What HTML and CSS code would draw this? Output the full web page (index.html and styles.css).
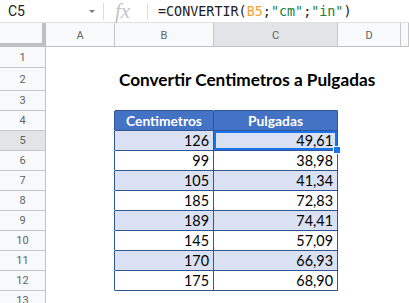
FILE: index.html
```html
<!DOCTYPE html>
<html lang="es">
<head>
    <meta charset="UTF-8">
    <meta name="viewport" content="width=device-width, initial-scale=1.0">
    <title>Convertir Centimetros a Pulgadas</title>
    <link rel="stylesheet" href="styles.css">
</head>
<body>
    <div class="formula-bar">
        <div class="name-box">
            <span class="cell-ref">C5</span>
            <span class="caret"></span>
        </div>
        <div class="sep"></div>
        <div class="fx">fx</div>
        <div class="sep"></div>
        <div class="formula">=CONVERTIR(<span class="ref">B5</span>;<span class="str">"cm"</span>;<span class="str">"in"</span>)</div>
    </div>

    <div class="sheet">
        <div class="row col-heads">
            <div class="corner"></div>
            <div class="ch col-a">A</div>
            <div class="ch col-b">B</div>
            <div class="ch col-c active">C</div>
            <div class="ch col-d">D</div>
            <div class="ch col-e"></div>
        </div>

        <div class="row r1">
            <div class="rh">1</div>
            <div class="cell col-a"></div>
            <div class="cell col-b"></div>
            <div class="cell col-c"></div>
            <div class="cell col-d"></div>
            <div class="cell col-e"></div>
        </div>

        <div class="row r2">
            <div class="rh">2</div>
            <div class="cell col-a"></div>
            <div class="cell col-b title">Convertir Centimetros a Pulgadas</div>
            <div class="cell col-c"></div>
            <div class="cell col-d"></div>
            <div class="cell col-e"></div>
        </div>

        <div class="row">
            <div class="rh">3</div>
            <div class="cell col-a"></div>
            <div class="cell col-b above-table"></div>
            <div class="cell col-c above-table"></div>
            <div class="cell col-d"></div>
            <div class="cell col-e"></div>
        </div>

        <div class="row">
            <div class="rh">4</div>
            <div class="cell col-a left-of-table"></div>
            <div class="cell col-b th">Centimetros</div>
            <div class="cell col-c th">Pulgadas</div>
            <div class="cell col-d"></div>
            <div class="cell col-e"></div>
        </div>

        <div id="rows"></div>

        <div class="row">
            <div class="rh">13</div>
            <div class="cell col-a"></div>
            <div class="cell col-b"></div>
            <div class="cell col-c"></div>
            <div class="cell col-d"></div>
            <div class="cell col-e"></div>
        </div>
    </div>

    <script>
        const data = [
            [126, '49,61'], [99, '38,98'], [105, '41,34'], [185, '72,83'],
            [189, '74,41'], [145, '57,09'], [170, '66,93'], [175, '68,90']
        ];

        let html = '';
        data.forEach((d, i) => {
            const n = i + 5;
            const band = i % 2 === 0 ? ' band' : '';
            const sel = n === 5 ? ' selected' : '';
            html += `
            <div class="row">
                <div class="rh${n === 5 ? ' active' : ''}">${n}</div>
                <div class="cell col-a left-of-table"></div>
                <div class="cell col-b td${band}">${d[0]}</div>
                <div class="cell col-c td${band}${sel}">${d[1]}</div>
                <div class="cell col-d"></div>
                <div class="cell col-e"></div>
            </div>`;
        });
        document.getElementById('rows').outerHTML = html;
    </script>
</body>
</html>
```

FILE: styles.css
```css
* {
    box-sizing: border-box;
}
body {
    margin: 0;
    background: #fff;
    font-family: Roboto, 'Liberation Sans', sans-serif;
    overflow: hidden;
}

/* formula bar */
.formula-bar {
    display: flex;
    align-items: center;
    height: 23px;
    border-bottom: 1px solid #e1e1e1;
}
.name-box {
    display: flex;
    align-items: center;
    justify-content: space-between;
    width: 103px;
    padding: 0 8px 0 8px;
}
.cell-ref {
    font-size: 14px;
    color: #202124;
}
.caret {
    width: 0;
    height: 0;
    border-left: 3px solid transparent;
    border-right: 3px solid transparent;
    border-top: 3px solid #777;
}
.sep {
    width: 1px;
    height: 17px;
    background: #dadce0;
}
.fx {
    width: 43px;
    padding-left: 11px;
    font-family: 'Liberation Serif', serif;
    font-style: italic;
    font-size: 21px;
    color: #c4c4c4;
    line-height: 20px;
}
.formula {
    padding-left: 10px;
    font-family: 'DejaVu Sans Mono', 'Liberation Mono', monospace;
    font-size: 13.4px;
    color: #202124;
    white-space: nowrap;
}
.formula .ref {
    color: #f6a136;
}
.formula .str {
    color: #188038;
}

/* grid */
.row {
    display: flex;
    height: 20px;
}
.row.r1 {
    height: 21px;
}
.row.r2 {
    height: 23px;
}
.col-a { width: 69px; }
.col-b { width: 99px; }
.col-c { width: 124px; }
.col-d { width: 63px; }
.col-e { flex: 1; }

.col-heads {
    height: 24px;
}
.corner {
    width: 46px;
    background: #f8f9fa;
    border-right: 4px solid #c0c0c0;
    border-bottom: 4px solid #c0c0c0;
}
.ch {
    display: flex;
    align-items: center;
    justify-content: center;
    background: #f8f9fa;
    border-right: 1px solid #c7c7c7;
    border-bottom: 1px solid #c0c0c0;
    font-size: 11px;
    color: #5f6368;
    padding-top: 1px;
}
.ch.active {
    background: #e2e4e7;
}
.rh {
    width: 46px;
    display: flex;
    align-items: center;
    justify-content: center;
    background: #f8f9fa;
    border-right: 1px solid #c0c0c0;
    border-bottom: 1px solid #c7c7c7;
    font-size: 11px;
    color: #5f6368;
}
.rh.active {
    background: #e2e4e7;
}
.cell {
    border-right: 1px solid #fff;
    border-bottom: 1px solid #fff;
    font-family: Lato, 'Liberation Sans', sans-serif;
    white-space: nowrap;
}
.title {
    position: relative;
    z-index: 1;
    overflow: visible;
    display: flex;
    align-items: flex-end;
    padding: 0 0 0 4px;
    line-height: 20px;
    font-size: 17.2px;
    font-weight: bold;
    color: #000;
}
.above-table {
    border-bottom-color: #2f5597;
}
.left-of-table {
    border-right-color: #2f5597;
}
.th {
    display: flex;
    align-items: flex-end;
    justify-content: center;
    padding-bottom: 1px;
    background: #4472c4;
    border-right-color: #2f5597;
    border-bottom-color: #2f5597;
    color: #fff;
    font-weight: bold;
    font-size: 13.8px;
}
.td {
    display: flex;
    align-items: flex-end;
    justify-content: flex-end;
    padding: 0 4px 1px 0;
    border-right-color: #2f5597;
    border-bottom-color: #2f5597;
    font-size: 14.4px;
    color: #000;
}
.td.band {
    background: #d9e1f2;
}
.td.selected {
    position: relative;
    box-shadow: inset 0 0 0 2px #1a73e8;
}
.td.selected::after {
    content: '';
    position: absolute;
    right: -4px;
    bottom: -4px;
    width: 6px;
    height: 6px;
    background: #1a73e8;
    border: 1px solid #fff;
}
```
